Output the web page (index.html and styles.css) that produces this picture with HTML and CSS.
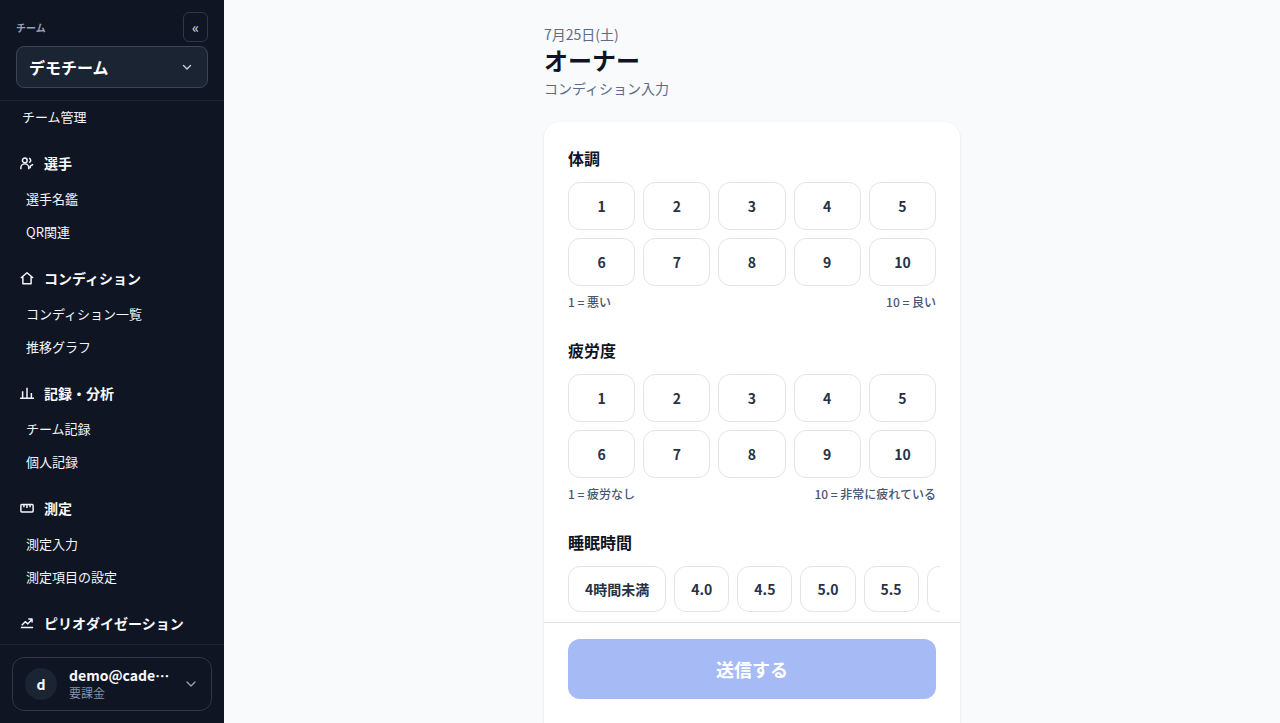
FILE: index.html
```html
<!DOCTYPE html>
<html lang="ja">

<head>
    <meta charset="UTF-8">
    <meta name="viewport" content="width=device-width, initial-scale=1.0">
    <title>コンディション入力</title>
    <link rel="stylesheet" href="styles.css">
</head>

<body>

    <aside class="sidebar">
        <div class="team">
            <div class="team-head">
                <label for="teamSelect">チーム</label>
                <button type="button" class="collapse" aria-label="メニューを閉じる">«</button>
            </div>
            <div class="team-select">
                <select id="teamSelect">
                    <option>デモチーム</option>
                </select>
                <svg class="chevron" viewBox="0 0 12 12"><path d="M2.500 4.500 6 8l3.500-3.500" /></svg>
            </div>
        </div>

        <nav class="nav">
            <a href="#" class="nav-top">チーム管理</a>

            <section>
                <h2>
                    <svg class="icon" viewBox="0 0 16 16"><circle cx="5.500" cy="5" r="2.700" /><path d="M1 15v-1.500a4.500 4.500 0 0 1 9 0V15M10.500 2.500q3.500 2.500 0 5M11.700 14v-2.500l3.300-2" /></svg>
                    選手
                </h2>
                <a href="#">選手名鑑</a>
                <a href="#">QR関連</a>
            </section>

            <section>
                <h2>
                    <svg class="icon" viewBox="0 0 16 16"><path d="M1 8 8 2l7 6M3.300 6.500v8h9.400v-8" /></svg>
                    コンディション
                </h2>
                <a href="#">コンディション一覧</a>
                <a href="#">推移グラフ</a>
            </section>

            <section>
                <h2>
                    <svg class="icon" viewBox="0 0 16 16"><path d="M0 14h16M3 13.500V6M8 13.500V2M13 13.500V8" /></svg>
                    記録・分析
                </h2>
                <a href="#">チーム記録</a>
                <a href="#">個人記録</a>
            </section>

            <section>
                <h2>
                    <svg class="icon" viewBox="0 0 16 16"><rect x="1" y="4" width="14" height="8.500" rx="1" /><path d="M4.500 4v3M8 4v4M11.500 4v3" /></svg>
                    測定
                </h2>
                <a href="#">測定入力</a>
                <a href="#">測定項目の設定</a>
            </section>

            <section>
                <h2>
                    <svg class="icon" viewBox="0 0 16 16"><path d="M1 13.200h14M2 10.500l4-4 3 2.500 4.500-5M9.500 3.500h4.300v4" /></svg>
                    ピリオダイゼーション
                </h2>
            </section>
        </nav>

        <div class="account">
            <button type="button" class="account-button">
                <span class="avatar">d</span>
                <span class="account-text">
                    <span class="account-name">demo@cade…</span>
                    <span class="account-plan">要課金</span>
                </span>
                <svg class="chevron" viewBox="0 0 12 12"><path d="M2 4l4 4 4-4" /></svg>
            </button>
        </div>
    </aside>

    <main>
        <div class="page">
            <header class="page-head">
                <p>7月25日(土)</p>
                <h1>オーナー</h1>
                <p>コンディション入力</p>
            </header>

            <form class="card">
                <div class="fields">
                    <section>
                        <h2>体調</h2>
                        <div class="scale">
                            <button type="button">1</button>
                            <button type="button">2</button>
                            <button type="button">3</button>
                            <button type="button">4</button>
                            <button type="button">5</button>
                            <button type="button">6</button>
                            <button type="button">7</button>
                            <button type="button">8</button>
                            <button type="button">9</button>
                            <button type="button">10</button>
                        </div>
                        <div class="hints">
                            <span>1 = 悪い</span>
                            <span>10 = 良い</span>
                        </div>
                    </section>

                    <section>
                        <h2>疲労度</h2>
                        <div class="scale">
                            <button type="button">1</button>
                            <button type="button">2</button>
                            <button type="button">3</button>
                            <button type="button">4</button>
                            <button type="button">5</button>
                            <button type="button">6</button>
                            <button type="button">7</button>
                            <button type="button">8</button>
                            <button type="button">9</button>
                            <button type="button">10</button>
                        </div>
                        <div class="hints">
                            <span>1 = 疲労なし</span>
                            <span>10 = 非常に疲れている</span>
                        </div>
                    </section>

                    <section>
                        <h2>睡眠時間</h2>
                        <div class="chips">
                            <button type="button">4時間未満</button>
                            <button type="button">4.0</button>
                            <button type="button">4.5</button>
                            <button type="button">5.0</button>
                            <button type="button">5.5</button>
                            <button type="button">6.0</button>
                        </div>
                    </section>
                </div>

                <div class="submit-bar">
                    <button type="submit" disabled>送信する</button>
                </div>
            </form>
        </div>
    </main>

</body>

</html>
```
FILE: styles.css
```css
* {
    box-sizing: border-box;
}

body {
    margin: 0;
    height: 100vh;
    display: flex;
    overflow: hidden;
    background: #f8fafc;
    color: #0f1424;
    font-family: "Noto Sans CJK JP", sans-serif;
    font-size: 14px;
    line-height: 20px;
}

h1,
h2,
p {
    margin: 0;
}

button,
select {
    font: inherit;
    color: inherit;
    cursor: pointer;
}

/* sidebar */
.sidebar {
    flex: none;
    width: 224px;
    display: flex;
    flex-direction: column;
    background: #101524;
    color: #f8fafc;
}

.team {
    padding: 12px 16px;
    border-bottom: 1px solid #1e2635;
}

.team-head {
    display: flex;
    justify-content: space-between;
    align-items: center;
    margin-bottom: 4px;
    color: #94a3b8;
    font-size: 10px;
    font-weight: 700;
}

.team-head label {
    padding-top: 2px;
}

.collapse {
    width: 25px;
    height: 30px;
    padding: 0;
    border: 1px solid #2f3848;
    border-radius: 6px;
    background: none;
    color: #cbd5e1;
    font-size: 14px;
    font-weight: 500;
}

.team-select {
    position: relative;
}

.team-select select {
    display: block;
    width: 100%;
    height: 42px;
    padding: 0 12px;
    appearance: none;
    border: 1px solid #3a4555;
    border-radius: 8px;
    background: #1b2433;
    color: #fff;
    font-size: 16px;
    font-weight: 700;
}

.chevron {
    flex: none;
    width: 12px;
    height: 12px;
    fill: none;
    stroke: #cbd5e1;
    stroke-width: 1.3;
    stroke-linecap: round;
    stroke-linejoin: round;
}

.team-select .chevron {
    position: absolute;
    right: 15px;
    top: 15px;
    pointer-events: none;
}

.nav {
    flex: 1;
    min-height: 0;
    overflow-y: auto;
    scrollbar-width: none;
    padding: 0 12px;
}

.nav a {
    display: block;
    padding: 6px 14px;
    color: #f1f5f9;
    font-size: 13px;
    line-height: 21px;
    text-decoration: none;
}

.nav .nav-top {
    padding: 5px 10px 7px;
}

.nav section {
    margin-top: 12px;
}

.nav section:not(:last-child) {
    padding-bottom: 1px;
}

.nav h2 {
    display: flex;
    align-items: center;
    gap: 10px;
    padding: 8px 8px 10px;
    font-size: 14px;
    line-height: 18px;
}

.icon {
    flex: none;
    width: 14px;
    height: 14px;
    fill: none;
    stroke: #f1f5f9;
    stroke-width: 1.7;
    stroke-linejoin: round;
}

.account {
    padding: 12px;
    border-top: 1px solid #1e2635;
}

.account-button {
    width: 100%;
    height: 54px;
    display: flex;
    align-items: center;
    gap: 12px;
    padding: 0 14px 0 12px;
    border: 1px solid #2f3848;
    border-radius: 12px;
    background: none;
    text-align: left;
}

.account-button .chevron {
    stroke: #94a3b8;
}

.avatar {
    flex: none;
    width: 32px;
    border-radius: 50%;
    background: #1b2433;
    font-weight: 700;
    line-height: 32px;
    text-align: center;
}

.account-text {
    flex: 1;
    min-width: 0;
    white-space: nowrap;
}

.account-name,
.account-plan {
    display: block;
}

.account-name {
    font-weight: 700;
    line-height: 18px;
}

.account-plan {
    color: #8292ac;
    font-size: 12px;
    line-height: 18px;
}

/* condition form */
main {
    flex: 1;
    min-width: 0;
    overflow-y: auto;
    scrollbar-width: none;
}

.page {
    max-width: 448px;
    margin: 0 auto;
    padding: 24px 16px;
}

.page-head {
    margin-bottom: 24px;
    color: #5d6b86;
}

h1 {
    padding-bottom: 2px;
    color: #0f1424;
    font-size: 24px;
    line-height: 32px;
}

.card {
    border-radius: 16px;
    background: #fff;
    box-shadow: 0 1px 3px rgba(15, 23, 42, 0.1);
}

.fields {
    display: grid;
    gap: 28px;
    padding: 24px 24px 60px;
}

.fields section {
    min-width: 0;
}

.fields h2 {
    margin-bottom: 12px;
    font-size: 16px;
    line-height: 24px;
}

.scale {
    display: grid;
    grid-template-columns: repeat(5, 1fr);
    gap: 8px;
}

.scale button,
.chips button {
    height: 48px;
    padding: 0;
    border: 1px solid #e2e4ea;
    border-radius: 12px;
    background: #fff;
    color: #293245;
    font-weight: 700;
}

.hints {
    display: flex;
    justify-content: space-between;
    margin-top: 8px;
    color: #475572;
    font-size: 12px;
    font-weight: 500;
    line-height: 16px;
}

.chips {
    display: flex;
    gap: 8px;
    margin: 0 -4px;
    padding: 0 4px;
    overflow-x: auto;
    scrollbar-width: none;
}

.chips button {
    flex: none;
    height: 46px;
    padding: 0 16px;
}

.submit-bar {
    position: sticky;
    bottom: 0;
    padding: 16px 24px 24px;
    border-top: 1px solid #e2e4ea;
    background: #fff;
}

.submit-bar button {
    display: block;
    width: 100%;
    height: 60px;
    border: 0;
    border-radius: 12px;
    background: #a6bbf6;
    color: #fff;
    font-size: 18px;
    font-weight: 700;
}
```
